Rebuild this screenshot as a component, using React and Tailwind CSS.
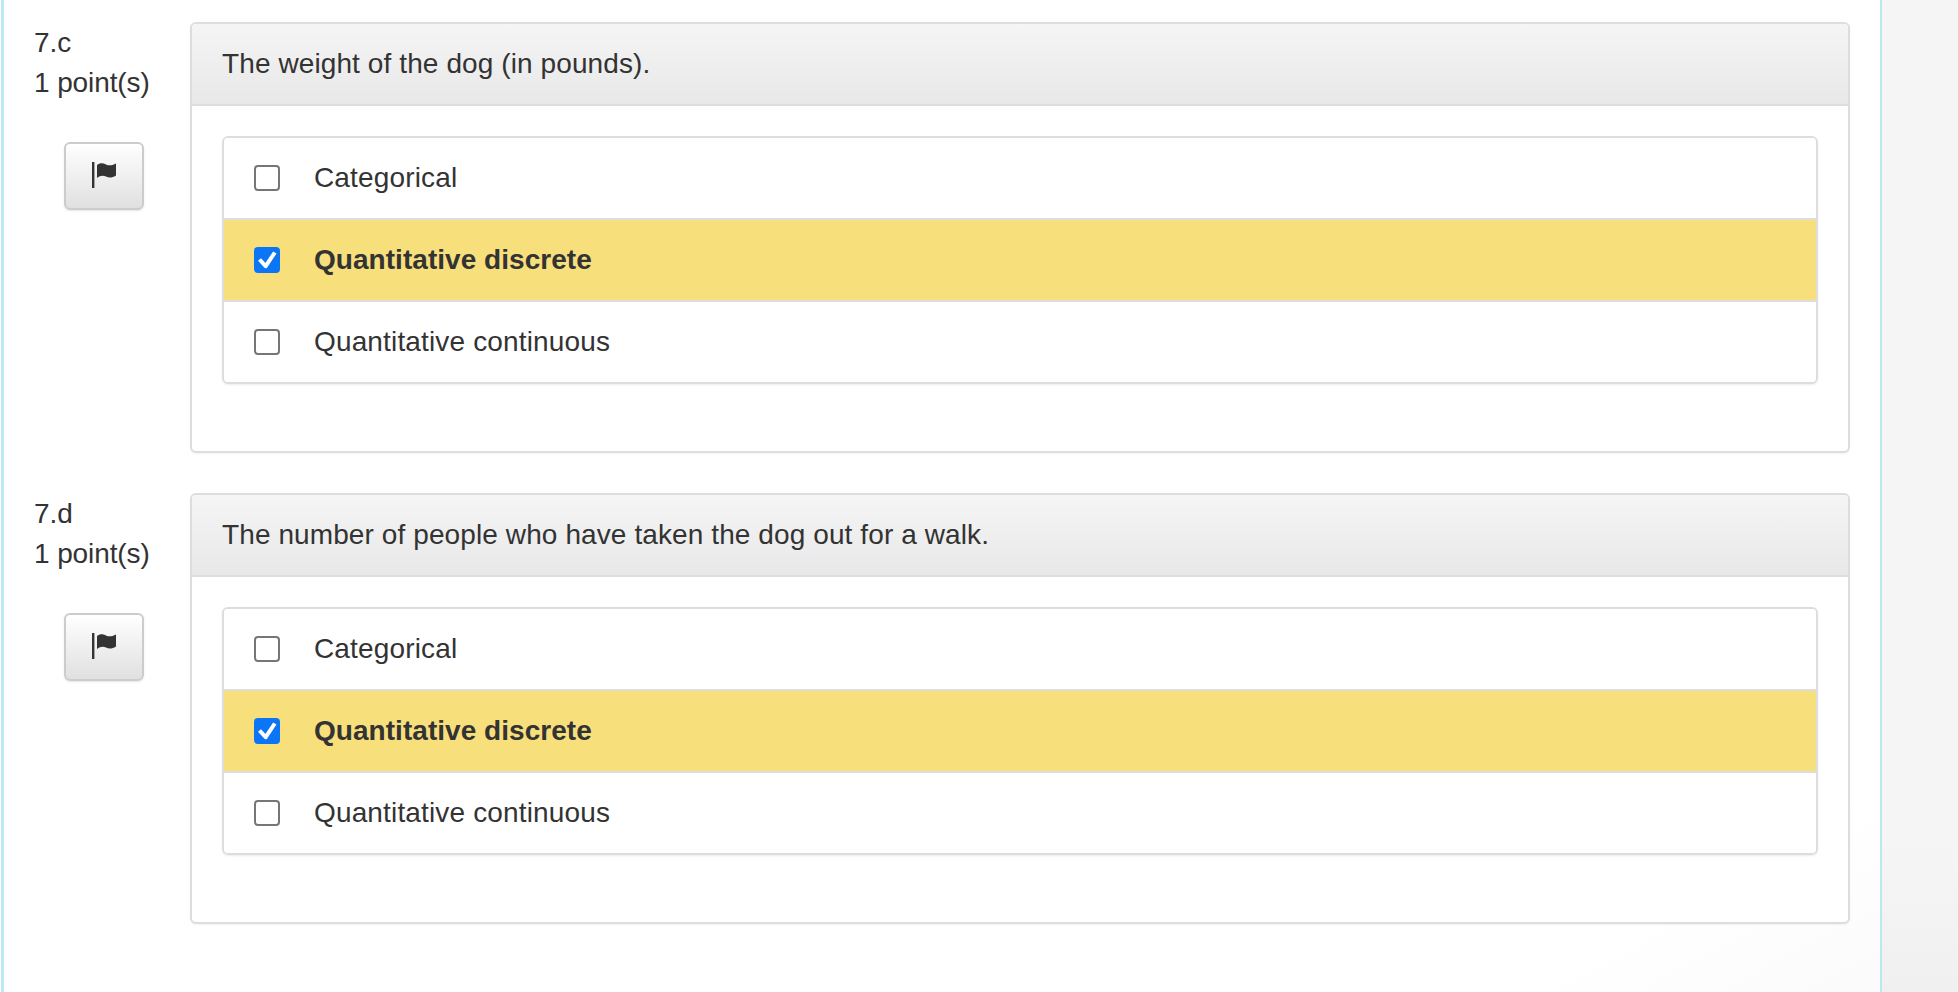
import React from 'react'

const font = { sans: 'font-["Liberation_Sans",Arial,sans-serif]' }

const questions = [
  { id: '7.c', text: 'The weight of the dog (in pounds).' },
  { id: '7.d', text: 'The number of people who have taken the dog out for a walk.' },
]
const options = ['Categorical', 'Quantitative discrete', 'Quantitative continuous']

function FlagIcon() {
  return (
    <svg width="24" height="26" viewBox="0 0 24 26" fill="#333" className="-mt-[2px]">
      <rect x="0" y="0" width="2.400" height="26" />
      <path d="M5 3C8 .5 11 1 14 2.500 17 4 20 3.500 24 1.500V13.500C20 16 17 16 14 14.500 11 13 8 13.500 5 16Z" />
    </svg>
  )
}

function Checkbox({ checked }) {
  if (checked) {
    return (
      <span className="block h-[26px] w-[26px] shrink-0 rounded-[4px] bg-[#0a76f6]">
        <svg width="26" height="26" viewBox="0 0 26 26" fill="none" stroke="#fff" strokeWidth="4" strokeLinejoin="round">
          <path d="M5.500 12.500l6.200 6.700L20.800 5.500" />
        </svg>
      </span>
    )
  }
  return <span className="block h-[26px] w-[26px] shrink-0 rounded-[4px] border-2 border-[#767676] bg-white" />
}

function Question({ id, text }) {
  return (
    <div className="flex">
      <div className="w-[156px] shrink-0 text-[28px] leading-[40px] tracking-[-0.1px] text-[#333]">
        <div className="mt-[1px]">{id}</div>
        <div>1 point(s)</div>
        <button className="mt-[39px] ml-[30px] flex h-[68px] w-[80px] items-center justify-center rounded-[6px] border-2 border-[#ccc] bg-gradient-to-b from-white to-[#e0e0e0] shadow-[0_1px_2px_rgba(0,0,0,0.1)]">
          <FlagIcon />
        </button>
      </div>
      <div className="w-[1660px] shrink-0 overflow-hidden rounded-[6px] border-2 border-[#ddd] bg-white shadow-[0_1px_2px_rgba(0,0,0,0.05)]">
        <div className="flex h-[82px] items-center border-b-2 border-[#ddd] bg-gradient-to-b from-[#f5f5f5] to-[#e8e8e8] px-[30px] text-[28px] tracking-[0.1px] text-[#333]">
          {text}
        </div>
        <div className="px-[30px] pt-[30px] pb-[67px]">
          <div className="overflow-hidden rounded-[6px] border-2 border-[#ddd] shadow-[0_1px_2px_rgba(0,0,0,0.075)]">
            {options.map((o, i) => (
              <div key={o} className={`flex items-center gap-[34px] px-[30px] text-[28px] text-[#333] ${i > 0 ? 'h-[82px] border-t-2 border-[#ddd]' : 'h-[80px]'} ${i === 1 ? 'bg-[#f7df7c] font-bold tracking-[0.04px]' : 'bg-white tracking-[0.15px]'}`}>
                <Checkbox checked={i === 1} />
                <span>{o}</span>
              </div>
            ))}
          </div>
        </div>
      </div>
    </div>
  )
}

export default function App() {
  return (
    <div className={`flex h-[992px] overflow-hidden bg-white ${font.sans}`}>
      <div className="ml-[1px] flex w-[1881px] shrink-0 flex-col gap-[40px] border-r-[2px] border-l-[3px] border-[#bce8f1] bg-gradient-to-br from-white from-[90%] to-[#fbfbfb] pt-[22px] pl-[30px]">
        {questions.map(q => <Question key={q.id} {...q} />)}
      </div>
      <div className="flex-1 bg-gradient-to-b from-[#f5f5f5] from-[85%] to-[#f0f0f0]" />
    </div>
  )
}
